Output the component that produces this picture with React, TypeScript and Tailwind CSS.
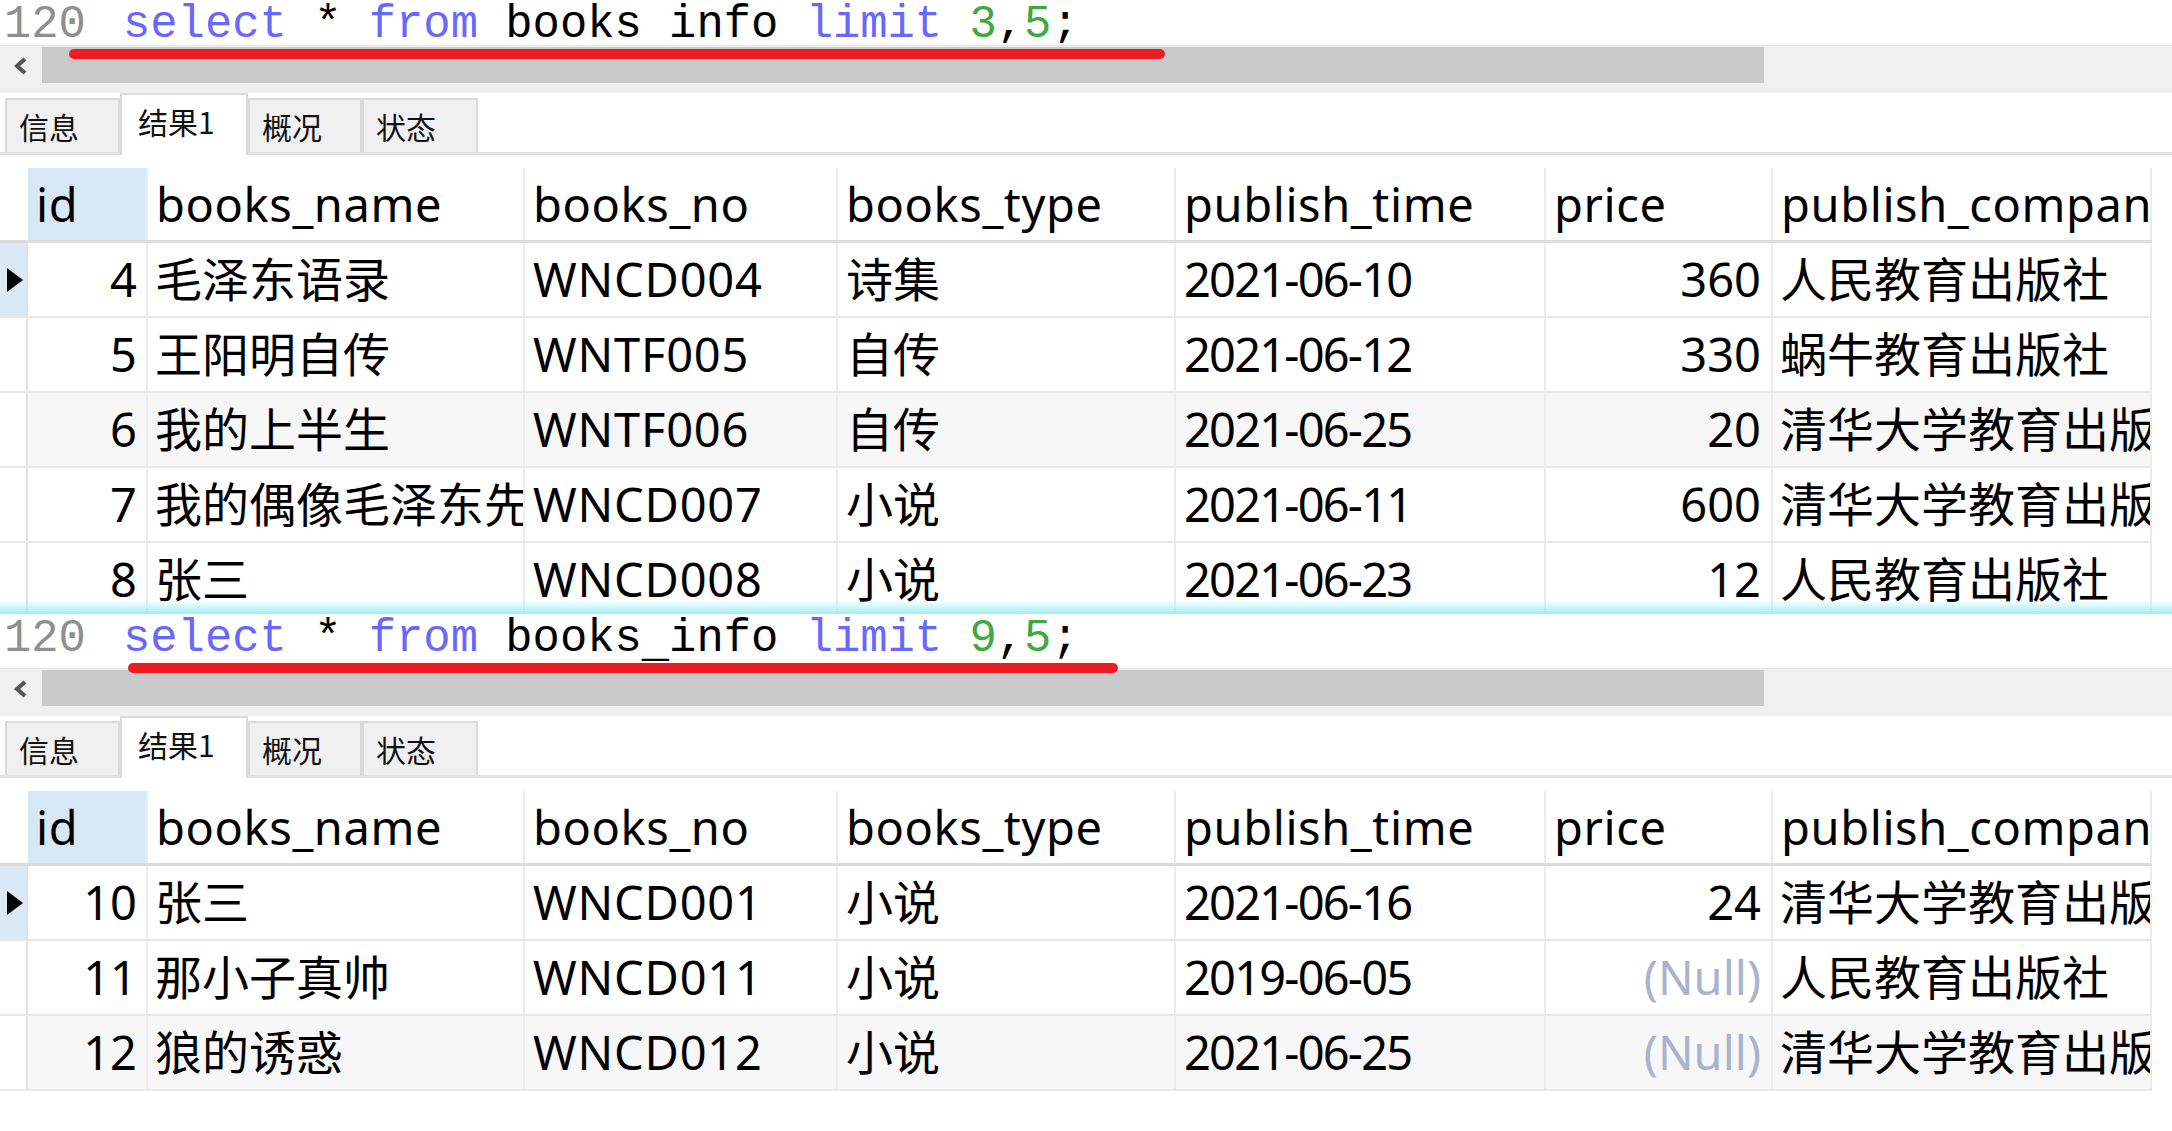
import React from 'react';

type Row = {
  id: number;
  name: string;
  no: string;
  type: string;
  time: string;
  price: string | null;
  company: string;
};

const firstRows: Row[] = [
  { id: 4, name: '毛泽东语录', no: 'WNCD004', type: '诗集', time: '2021-06-10', price: '360', company: '人民教育出版社' },
  { id: 5, name: '王阳明自传', no: 'WNTF005', type: '自传', time: '2021-06-12', price: '330', company: '蜗牛教育出版社' },
  { id: 6, name: '我的上半生', no: 'WNTF006', type: '自传', time: '2021-06-25', price: '20', company: '清华大学教育出版社' },
  { id: 7, name: '我的偶像毛泽东先', no: 'WNCD007', type: '小说', time: '2021-06-11', price: '600', company: '清华大学教育出版社' },
  { id: 8, name: '张三', no: 'WNCD008', type: '小说', time: '2021-06-23', price: '12', company: '人民教育出版社' },
];

const secondRows: Row[] = [
  { id: 10, name: '张三', no: 'WNCD001', type: '小说', time: '2021-06-16', price: '24', company: '清华大学教育出版社' },
  { id: 11, name: '那小子真帅', no: 'WNCD011', type: '小说', time: '2019-06-05', price: null, company: '人民教育出版社' },
  { id: 12, name: '狼的诱惑', no: 'WNCD012', type: '小说', time: '2021-06-25', price: null, company: '清华大学教育出版社' },
];

const gridCols = 'grid grid-cols-[28px_120px_377px_313px_338px_370px_227px_379px] w-[2152px]';

function Cell({ children, className = '' }: { children?: React.ReactNode; className?: string }) {
  return (
    <div className={`overflow-hidden whitespace-nowrap border-r-2 border-[#ececec] px-[8px] ${className}`}>
      {children}
    </div>
  );
}

// editor line; the first pane's line is cut short by the scroll bar below it
function SqlLine({ first, clip, height }: { first: string; clip: string; height: string }) {
  return (
    <div className={`${height} bg-white`}>
      <div className={`${clip} overflow-hidden whitespace-pre font-['Liberation_Mono',monospace] text-[45.5px] leading-[50px]`}>
        <span className="inline-block w-[123px] pl-[4px] text-[#8f8f8f]">120</span>
        <span className="text-[#6868ff]">select</span>
        <span className="text-black"> * </span>
        <span className="text-[#6868ff]">from</span>
        <span className="text-black"> books</span>
        <span className="relative top-[5px] text-black">_</span>
        <span className="text-black">info </span>
        <span className="text-[#6868ff]">limit</span>
        <span className="text-black"> </span>
        <span className="text-[#3fa83f]">{first}</span>
        <span className="text-black">,</span>
        <span className="text-[#3fa83f]">5</span>
        <span className="text-black">;</span>
      </div>
    </div>
  );
}

function ScrollRow() {
  return (
    <div className="flex h-[48px] items-start border-t border-[#e6e6e6] bg-[#f0f0f0]">
      <div className="flex h-[40px] w-[42px] items-center justify-center">
        <svg width="16" height="18" viewBox="0 0 16 18">
          <polyline points="12,2 4,9 12,16" fill="none" stroke="#555" strokeWidth="4" />
        </svg>
      </div>
      <div className="mt-[1px] h-[36px] w-[1722px] bg-[#c9c9c9]" />
    </div>
  );
}

function Tabs() {
  const tabs = [
    { label: '信息', w: 'w-[115px]' },
    { label: '结果1', w: 'w-[128px]', active: true },
    { label: '概况', w: 'w-[114px]' },
    { label: '状态', w: 'w-[116px]' },
  ];
  return (
    <div className="flex h-[62px] items-end border-b-[3px] border-[#e2e2e2] bg-white pl-[5px] font-['Noto_Sans_CJK_SC',sans-serif] text-[30px] text-[#111]">
      {tabs.map((t) =>
        t.active ? (
          <div
            key={t.label}
            className={`${t.w} -mb-[3px] flex h-[62px] items-center border-2 border-b-0 border-[#dadada] bg-white pb-[8px] pl-[16px]`}
          >
            {t.label}
          </div>
        ) : (
          <div
            key={t.label}
            className={`${t.w} flex h-[54px] items-center border-2 border-b-0 border-[#dadada] bg-[#f0f0f0] pl-[12px]`}
          >
            {t.label}
          </div>
        )
      )}
    </div>
  );
}

function Grid({ rows }: { rows: Row[] }) {
  const headers = ['books_name', 'books_no', 'books_type', 'publish_time', 'price', 'publish_company'];
  return (
    <div className="mt-[13px] font-['Noto_Sans','Noto_Sans_CJK_SC',sans-serif] text-[47px] text-black">
      <div className={`${gridCols} h-[75px] border-b-[3px] border-[#dcdcdc] leading-[72px] tracking-[0.6px]`}>
        <div />
        <Cell className="border-[#e2e2e2] bg-[#d8e7f6]">id</Cell>
        {headers.map((h) => (
          <Cell key={h} className="border-[#e2e2e2]">
            {h}
          </Cell>
        ))}
      </div>
      {rows.map((r, i) => (
        <div
          key={r.id}
          className={`${gridCols} h-[75px] border-b-2 border-[#e8e8e8] leading-[73px] ${i === 2 ? 'bg-[#f7f7f7]' : 'bg-white'}`}
        >
          <div className={`flex items-center border-r-2 border-[#e2e2e2] pl-[7px] ${i === 0 ? 'bg-[#dbe8f5]' : 'bg-white'}`}>
            {i === 0 && (
              <svg width="16" height="24" viewBox="0 0 16 24">
                <polygon points="0,0 16,12 0,24" fill="#000" />
              </svg>
            )}
          </div>
          <Cell className="pr-[9px] text-right">{r.id}</Cell>
          <Cell className="pl-[7px]">{r.name}</Cell>
          <Cell className="tracking-[0.8px]">{r.no}</Cell>
          <Cell>{r.type}</Cell>
          <Cell className="tracking-[-1.8px]">{r.time}</Cell>
          {r.price === null ? (
            <Cell className="pr-[10px] text-right text-[#aab3cb]">(Null)</Cell>
          ) : (
            <Cell className="pr-[10px] text-right">{r.price}</Cell>
          )}
          <Cell className="pl-[7px]">{r.company}</Cell>
        </div>
      ))}
    </div>
  );
}

export default function App() {
  return (
    <div className="h-[1131px] w-[2172px] overflow-hidden bg-white">
      {/* limit 3,5 */}
      <div className="relative h-[614px] overflow-hidden">
        <SqlLine first="3" clip="h-[43px]" height="h-[45px]" />
        <ScrollRow />
        <Tabs />
        <Grid rows={firstRows} />
        <div className="absolute left-[69px] top-[49px] h-[10px] w-[1096px] rounded-full bg-[#ed1c24]" />
        <div className="absolute bottom-0 left-0 h-[14px] w-full bg-gradient-to-b from-[#ffffff00] to-[#9eeef5]" />
      </div>

      {/* limit 9,5 */}
      <div className="relative">
        <SqlLine first="9" clip="h-[54px]" height="h-[54px]" />
        <ScrollRow />
        <Tabs />
        <Grid rows={secondRows} />
        <div className="absolute left-[128px] top-[49px] h-[10px] w-[990px] rounded-full bg-[#ed1c24]" />
      </div>
    </div>
  );
}
